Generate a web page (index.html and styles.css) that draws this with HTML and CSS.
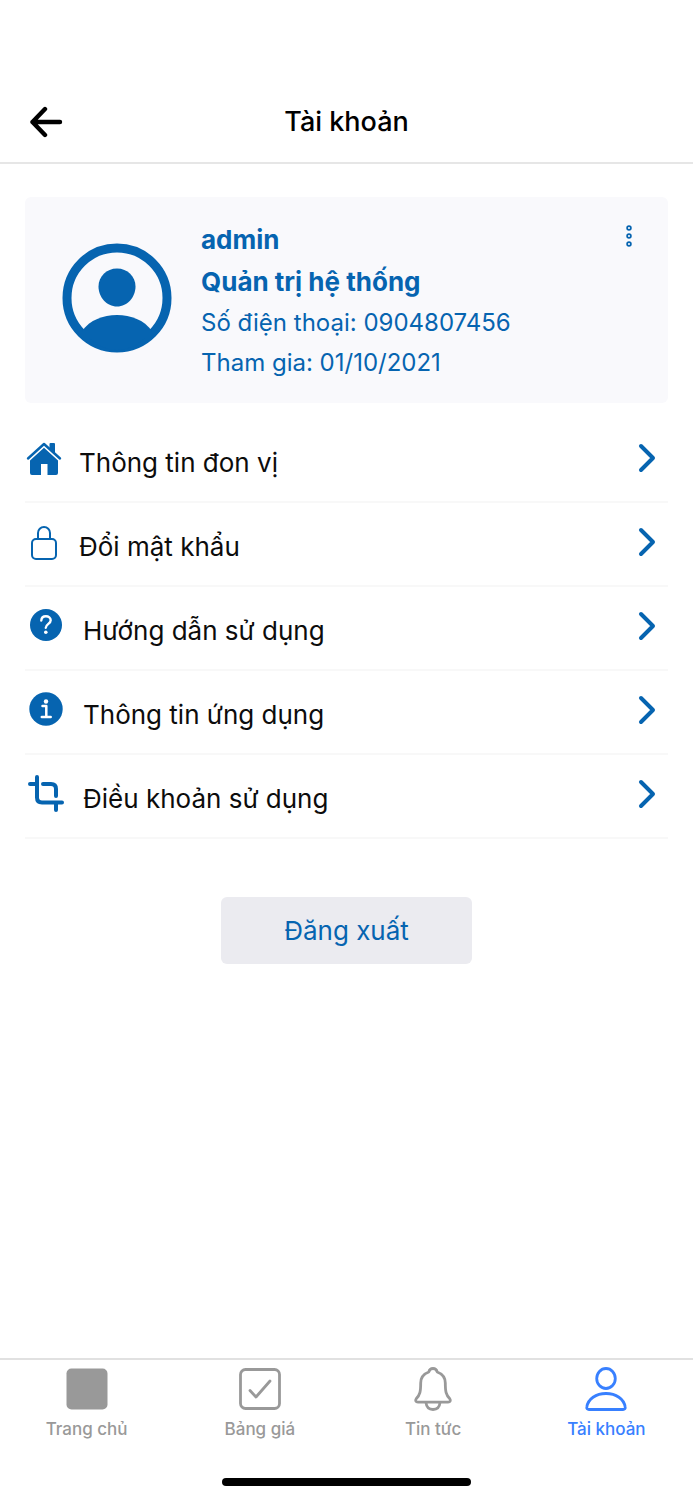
FILE: index.html
```html
<!DOCTYPE html>
<html lang="vi">
<head>
<meta charset="utf-8">
<meta name="viewport" content="width=device-width, initial-scale=1">
<title>Tài khoản</title>
<link rel="stylesheet" href="styles.css">
</head>
<body>
<header class="topbar">
  <button class="back" type="button" aria-label="Quay lại">
    <svg width="34" height="32" viewBox="0 0 34 32" fill="none" stroke="currentColor" stroke-width="4.400" stroke-linecap="round" stroke-linejoin="round"><path d="M16 3 3.500 16 16 29M3.500 16H31"/></svg>
  </button>
  <h1 class="title">Tài khoản</h1>
</header>

<main class="content">
  <section class="profile">
    <svg class="avatar" width="110" height="110" viewBox="0 0 110 110">
      <circle cx="55" cy="55" r="50" fill="none" stroke="currentColor" stroke-width="9"/>
      <path fill="currentColor" d="M55 25.500c10.500 0 18.500 8 18.500 18C73.500 54 65.500 63.500 55 63.500S36.500 54 36.500 43.500c0-10 8-18 18.500-18z"/>
      <path fill="currentColor" d="M20 88C28 77 41 72 55 72s27 5 35 16C81 99 69 107 55 107S29 99 20 88z"/>
    </svg>
    <div class="details">
      <h2 class="name">admin</h2>
      <p class="name">Quản trị hệ thống</p>
      <p class="detail">Số điện thoại: 0904807456</p>
      <p class="detail">Tham gia: 01/10/2021</p>
    </div>
    <button class="more" type="button" aria-label="Tùy chọn">
      <svg width="8" height="24" viewBox="0 0 8 24" fill="none" stroke="currentColor" stroke-width="1.700"><circle cx="4" cy="4" r="1.900"/><circle cx="4" cy="12" r="1.900"/><circle cx="4" cy="20" r="1.900"/></svg>
    </button>
  </section>

  <nav class="menu">
    <a class="row" href="#unit">
      <span class="icon"><svg width="36" height="34" viewBox="0 0 36 34"><path fill="currentColor" d="M23.500 2q0-1 1-1h3.500q1 0 1 1v10l-5.500-5z"/><path fill="none" stroke="currentColor" stroke-width="2.400" stroke-linecap="round" stroke-linejoin="round" d="M2 16.500 18 2 34 16.500"/><path fill="currentColor" d="M18 5.800 32 18.500V31q0 2-2 2h-8.500V22h-6.500v11H6q-2 0-2-2V18.500z"/></svg></span>
      <span class="label">Thông tin đon vị</span>
      <svg class="chevron" width="20" height="32" viewBox="0 0 20 32"><path d="M4 4l12 12L4 28"/></svg>
    </a>
    <a class="row" href="#password">
      <span class="icon"><svg width="28" height="36" viewBox="0 0 28 36" fill="none" stroke="currentColor" stroke-width="2"><rect x="2" y="14" width="24" height="20" rx="4"/><path d="M8 14V8a6 6 0 0 1 12 0v6"/></svg></span>
      <span class="label">Đổi mật khẩu</span>
      <svg class="chevron" width="20" height="32" viewBox="0 0 20 32"><path d="M4 4l12 12L4 28"/></svg>
    </a>
    <a class="row" href="#guide">
      <span class="icon icon-wide"><svg width="34" height="34" viewBox="0 0 34 34"><circle cx="17" cy="17" r="16" fill="currentColor"/><path fill="none" stroke="#fff" stroke-width="2.400" stroke-linecap="round" stroke-linejoin="round" d="M12.300 12.500c.2-3 2.100-4.300 4.600-4.300 2.700 0 4.800 1.600 4.800 4.100 0 3.600-4.700 3.600-4.900 7.500"/><circle cx="16.800" cy="24.300" r="1.800" fill="#fff"/></svg></span>
      <span class="label">Hướng dẫn sử dụng</span>
      <svg class="chevron" width="20" height="32" viewBox="0 0 20 32"><path d="M4 4l12 12L4 28"/></svg>
    </a>
    <a class="row" href="#about">
      <span class="icon icon-wide"><svg width="34" height="34" viewBox="0 0 34 34"><circle cx="17" cy="17" r="16.700" fill="currentColor"/><path fill="none" stroke="#fff" stroke-width="2.500" stroke-linecap="round" stroke-linejoin="round" d="M13.500 14h3.800v11M12.800 25h8.900"/><circle cx="17" cy="9.500" r="2.200" fill="#fff"/></svg></span>
      <span class="label">Thông tin ứng dụng</span>
      <svg class="chevron" width="20" height="32" viewBox="0 0 20 32"><path d="M4 4l12 12L4 28"/></svg>
    </a>
    <a class="row" href="#terms">
      <span class="icon icon-wide"><svg width="38" height="38" viewBox="0 0 38 38" fill="none" stroke="currentColor" stroke-width="4" stroke-linecap="round" stroke-linejoin="round"><path d="M3 10h7M10 3v20.500q0 5 5 5h20M16 10h8q5 0 5 5v7M29 28.500V36"/></svg></span>
      <span class="label">Điều khoản sử dụng</span>
      <svg class="chevron" width="20" height="32" viewBox="0 0 20 32"><path d="M4 4l12 12L4 28"/></svg>
    </a>
  </nav>

  <button class="logout" type="button">Đăng xuất</button>
</main>

<footer class="bottom">
  <nav class="tabs">
    <a class="tab" href="#home">
      <svg width="44" height="44" viewBox="0 0 44 44"><rect x="1.500" y="1.500" width="41" height="41" rx="5" fill="currentColor"/></svg>
      <span>Trang chủ</span>
    </a>
    <a class="tab" href="#prices">
      <svg width="44" height="44" viewBox="0 0 44 44" fill="none" stroke="currentColor" stroke-width="2.800" stroke-linecap="round" stroke-linejoin="round"><rect x="2.500" y="2.500" width="39" height="39" rx="5"/><path d="M12 23.500l6 6.500 14-16"/></svg>
      <span>Bảng giá</span>
    </a>
    <a class="tab" href="#news">
      <svg width="44" height="44" viewBox="0 0 44 44" fill="none" stroke="currentColor" stroke-width="2.800" stroke-linecap="round" stroke-linejoin="round"><path d="M22 1.500c-2.300 0-3.700 1.300-4.200 3.500C12.500 7 9.700 10.500 9.700 16c0 8.500-.7 12-4.500 15.800-1.200 1.700-.3 3.400 1.700 3.400h30.200c2 0 2.900-1.700 1.700-3.400C35 28 34.300 24.500 34.300 16c0-5.500-2.800-9-8.100-11-.5-2.200-1.900-3.500-4.200-3.500z"/><path d="M15 35.500c.4 4.500 3.100 7 7 7s6.600-2.500 7-7"/></svg>
      <span>Tin tức</span>
    </a>
    <a class="tab tab-active" href="#account" aria-current="page">
      <svg width="44" height="44" viewBox="0 0 44 44" fill="none" stroke="currentColor" stroke-width="2.800" stroke-linecap="round" stroke-linejoin="round"><ellipse cx="22" cy="11.500" rx="9.300" ry="10"/><path d="M5 42.500c-1.600 0-2.500-.9-2.200-2.500C4 32 12 26.500 22 26.500S40 32 41.200 40c.3 1.600-.6 2.500-2.200 2.500z"/></svg>
      <span>Tài khoản</span>
    </a>
  </nav>
  <div class="handle"></div>
</footer>
</body>
</html>
```
FILE: styles.css
```css
:root {
  --blue: #0664b0;
  --active: #3880ff;
  --muted: #999;
}

* {
  box-sizing: border-box;
}

body {
  margin: 0;
  min-height: 100vh;
  display: flex;
  flex-direction: column;
  background: #fff;
  color: #0c0c0c;
  font-family: Inter, "Noto Sans", sans-serif;
}

h1, h2, p {
  margin: 0;
}

a {
  color: inherit;
  text-decoration: none;
}

button {
  border: 0;
  padding: 0;
  background: none;
  color: inherit;
  font: inherit;
}

svg {
  display: block;
  flex: none;
}

.topbar {
  display: grid;
  grid-template-columns: 1fr auto 1fr;
  align-items: center;
  padding: 102px 29px 20px;
  border-bottom: 2px solid #e6e6e6;
  color: #000;
}

.back {
  justify-self: start;
}

.title {
  font-size: 27px;
  line-height: 40px;
  font-weight: 500;
}

.content {
  display: flex;
  flex-direction: column;
  padding: 33px 25px 40px;
}

.profile {
  display: flex;
  align-items: flex-start;
  padding: 22px 35px 20px 37px;
  border-radius: 6px;
  background: #f9f9fc;
  color: var(--blue);
}

.avatar {
  margin-top: 24px;
}

.details {
  flex: 1;
  margin-left: 29px;
}

.name {
  font-size: 26px;
  line-height: 42px;
  font-weight: 700;
}

.detail {
  font-size: 24px;
  line-height: 40px;
}

.more {
  margin-top: 5px;
}

.menu {
  margin-top: 16px;
}

.row {
  display: flex;
  align-items: flex-start;
  height: 84px;
  padding: 20px 11px 0 1px;
  border-bottom: 2px solid #f8f8f8;
}

.icon {
  display: flex;
  align-items: center;
  justify-content: center;
  width: 36px;
  height: 40px;
  color: var(--blue);
}

.icon-wide {
  width: 40px;
  height: 36px;
}

.label {
  flex: 1;
  margin: 8px 0 0 17px;
  font-size: 26px;
  line-height: 32px;
}

.chevron {
  margin-top: 3px;
  fill: none;
  stroke: var(--blue);
  stroke-width: 4;
  stroke-linecap: round;
  stroke-linejoin: round;
}

.logout {
  align-self: center;
  margin-top: 58px;
  padding: 16px 63px;
  border-radius: 6px;
  background: #ebebf0;
  color: var(--blue);
  font-size: 26px;
  line-height: 35px;
}

.bottom {
  margin-top: auto;
  padding: 7px 0 14px;
  border-top: 2px solid #e1e1e1;
}

.tabs {
  display: grid;
  grid-template-columns: repeat(4, 1fr);
}

.tab {
  display: flex;
  flex-direction: column;
  align-items: center;
  gap: 6px;
  color: var(--muted);
  font-size: 17px;
  line-height: 24px;
  font-weight: 500;
}

.tab-active {
  color: var(--active);
}

.handle {
  width: 36%;
  height: 8px;
  margin: 37px auto 0;
  border-radius: 4px;
  background: #000;
}
```
